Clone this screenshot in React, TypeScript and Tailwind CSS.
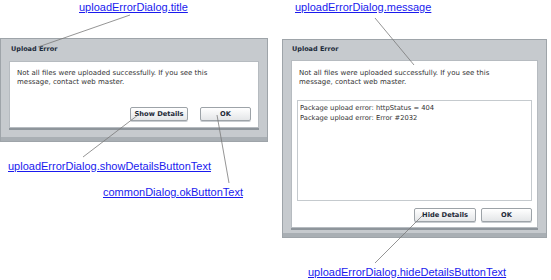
import React from "react";

const dlgFont = { fontFamily: '"DejaVu Sans", Verdana, sans-serif' };

function Btn({ label, w }: { label: string; w: string }) {
  return (
    <div
      className={`${w} h-[14px] flex items-center justify-center rounded-[2px] border border-[#9da3a8] bg-gradient-to-b from-[#ffffff] to-[#e4e6e8] shadow-[0_1px_0_#c9cdd1] text-[6.7px] font-bold text-[#1e2a38]`}
    >
      {label}
    </div>
  );
}

function Label({ text, cls }: { text: string; cls: string }) {
  return (
    <div
      className={`absolute ${cls} text-[11px] leading-[13px] text-[#1a1aee] underline whitespace-nowrap`}
      style={{ fontFamily: '"Liberation Sans", Arial, sans-serif' }}
    >
      {text}
    </div>
  );
}

export default function App() {
  return (
    <div className="relative w-[551px] h-[280px] bg-white overflow-hidden">
      <div className="flex items-start pt-[38px]" style={dlgFont}>
        {/* Left dialog */}
        <div className="w-[268px] h-[104px] border border-[#9ea4a9] bg-[#c6cace] flex flex-col shadow-[inset_0_-4px_0_#a9afb4]">
          <div className="h-[22px] flex items-center pl-[10px] text-[6.5px] font-bold text-[#1c2b3a]">
            Upload Error
          </div>
          <div className="mx-[8px] h-[67px] bg-white border border-[#b6bbc0] shadow-[0_2px_0_#8e959b] flex flex-col px-[7px] pt-[7px] pb-[6px]">
            <div className="text-[7px] leading-[9px] text-[#333]">
              Not all files were uploaded successfully. If you see this
              <br />
              message, contact web master.
            </div>
            <div className="mt-auto flex justify-end gap-[12px]">
              <Btn label="Show Details" w="w-[58px]" />
              <Btn label="OK" w="w-[51px]" />
            </div>
          </div>
        </div>

        {/* Right dialog */}
        <div className="ml-[14px] mt-[1px] w-[265px] h-[199px] border border-[#9ea4a9] bg-[#c6cace] flex flex-col shadow-[inset_0_-4px_0_#a9afb4]">
          <div className="h-[20px] flex items-center pl-[9px] text-[6.5px] font-bold text-[#1c2b3a]">
            Upload Error
          </div>
          <div className="mx-[8px] h-[168px] bg-white border border-[#b6bbc0] shadow-[0_2px_0_#8e959b] flex flex-col px-[5px] pt-[8px] pb-[5px]">
            <div className="ml-[2px] text-[7px] leading-[9px] text-[#333]">
              Not all files were uploaded successfully. If you see this
              <br />
              message, contact web master.
            </div>
            <div className="mt-[13px] h-[101px] border border-[#c5cace] px-[2px] pt-[2px] text-[6.75px] leading-[10px] text-[#333]">
              Package upload error: httpStatus = 404
              <br />
              Package upload error: Error #2032
            </div>
            <div className="mt-auto flex justify-end gap-[5px]">
              <Btn label="Hide Details" w="w-[62px]" />
              <Btn label="OK" w="w-[51px]" />
            </div>
          </div>
        </div>
      </div>

      <svg
        className="absolute inset-0 pointer-events-none"
        width="551"
        height="280"
        viewBox="0 0 551 280"
      >
        <g stroke="#7a7a7a" strokeWidth="0.8" fill="none">
          <line x1="130" y1="15" x2="38" y2="47" />
          <line x1="138" y1="115" x2="83" y2="157" />
          <line x1="217" y1="115" x2="229" y2="183" />
          <line x1="375" y1="18" x2="414" y2="65" />
          <line x1="423" y1="215" x2="375" y2="263" />
        </g>
      </svg>

      <Label text="uploadErrorDialog.title" cls="left-[79px] top-[1px]" />
      <Label text="uploadErrorDialog.showDetailsButtonText" cls="left-[8px] top-[160px]" />
      <Label text="commonDialog.okButtonText" cls="left-[103px] top-[186px]" />
      <Label text="uploadErrorDialog.message" cls="left-[295px] top-[1px]" />
      <Label text="uploadErrorDialog.hideDetailsButtonText" cls="left-[308px] top-[266px]" />
    </div>
  );
}
